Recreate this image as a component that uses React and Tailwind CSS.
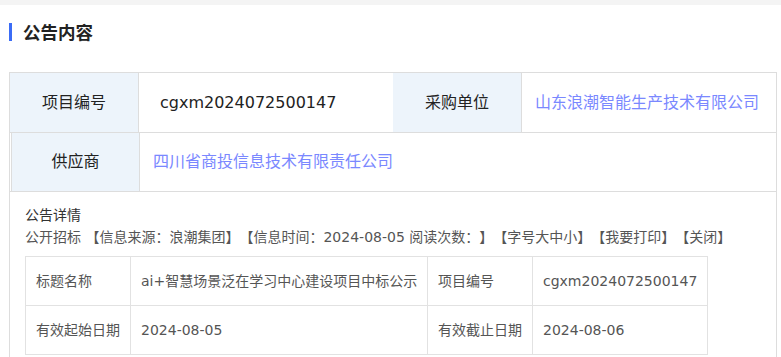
export default function App() {
  const font = { fontFamily: '"DejaVu Sans", "Noto Sans CJK SC", sans-serif' };
  return (
    <div className="w-[781px] h-[357px] overflow-hidden bg-white [text-spacing-trim:space-all]" style={font}>
      <div className="h-[5px] bg-[#f4f4f4]" />
      <div className="pl-[9px] pr-[4px]">
        <div className="flex items-center h-[18px] mt-[18px]">
          <div className="w-[3px] h-[18px] bg-[#3b6cf6]" />
          <div className="ml-[11px] text-[17.5px] font-bold text-[#222] leading-none translate-y-[2px]">公告内容</div>
        </div>
        <div className="mt-[31px] border-l border-r border-t border-[#dddddd]">
          <div className="flex h-[60px] border-b border-[#dddddd]">
            <div className="w-[129px] bg-[#edf4fb] border-r border-[#dddddd] flex items-center justify-center text-[16px] text-[#222]">项目编号</div>
            <div className="w-[254px] flex items-center pl-[21px] text-[16px] text-[#222]">cgxm2024072500147</div>
            <div className="w-[129px] bg-[#edf4fb] border-r border-[#dddddd] flex items-center justify-center text-[16px] text-[#222]">采购单位</div>
            <div className="flex-1 flex items-center pl-[13px] text-[16px] text-[#7a88ff]">山东浪潮智能生产技术有限公司</div>
          </div>
          <div className="flex h-[59px] border-b border-[#dddddd] pl-px">
            <div className="w-[129px] bg-[#edf4fb] border-l border-r border-[#dddddd] flex items-center justify-center text-[16px] text-[#222]">供应商</div>
            <div className="flex-1 flex items-center pl-[13px] text-[16px] text-[#7a88ff]">四川省商投信息技术有限责任公司</div>
          </div>
          <div className="pl-[15px] pt-[13px] h-[200px]">
            <div className="text-[14px] leading-[20px] text-[#333]">公告详情</div>
            <div className="text-[14px] leading-[22px] mt-[1px] text-[#555] whitespace-nowrap">公开招标 【信息来源：浪潮集团】【信息时间：2024-08-05 阅读次数：】【字号大中小】【我要打印】【关闭】</div>
            <div className="mt-[8px] w-[683px] border-l border-t border-[#e2e2e2] text-[14px] text-[#555]">
              <div className="flex h-[49px] border-b border-[#e2e2e2]">
                <div className="w-[105px] border-r border-[#e2e2e2] flex items-center pl-[10px]">标题名称</div>
                <div className="w-[297px] border-r border-[#e2e2e2] flex items-center pl-[10px] whitespace-nowrap">ai+智慧场景泛在学习中心建设项目中标公示</div>
                <div className="w-[105px] border-r border-[#e2e2e2] flex items-center pl-[10px]">项目编号</div>
                <div className="flex-1 border-r border-[#e2e2e2] flex items-center pl-[10px]">cgxm2024072500147</div>
              </div>
              <div className="flex h-[49px] border-b border-[#e2e2e2]">
                <div className="w-[105px] border-r border-[#e2e2e2] flex items-center pl-[10px]">有效起始日期</div>
                <div className="w-[297px] border-r border-[#e2e2e2] flex items-center pl-[10px]">2024-08-05</div>
                <div className="w-[105px] border-r border-[#e2e2e2] flex items-center pl-[10px]">有效截止日期</div>
                <div className="flex-1 border-r border-[#e2e2e2] flex items-center pl-[10px]">2024-08-06</div>
              </div>
            </div>
          </div>
        </div>
      </div>
    </div>
  );
}
